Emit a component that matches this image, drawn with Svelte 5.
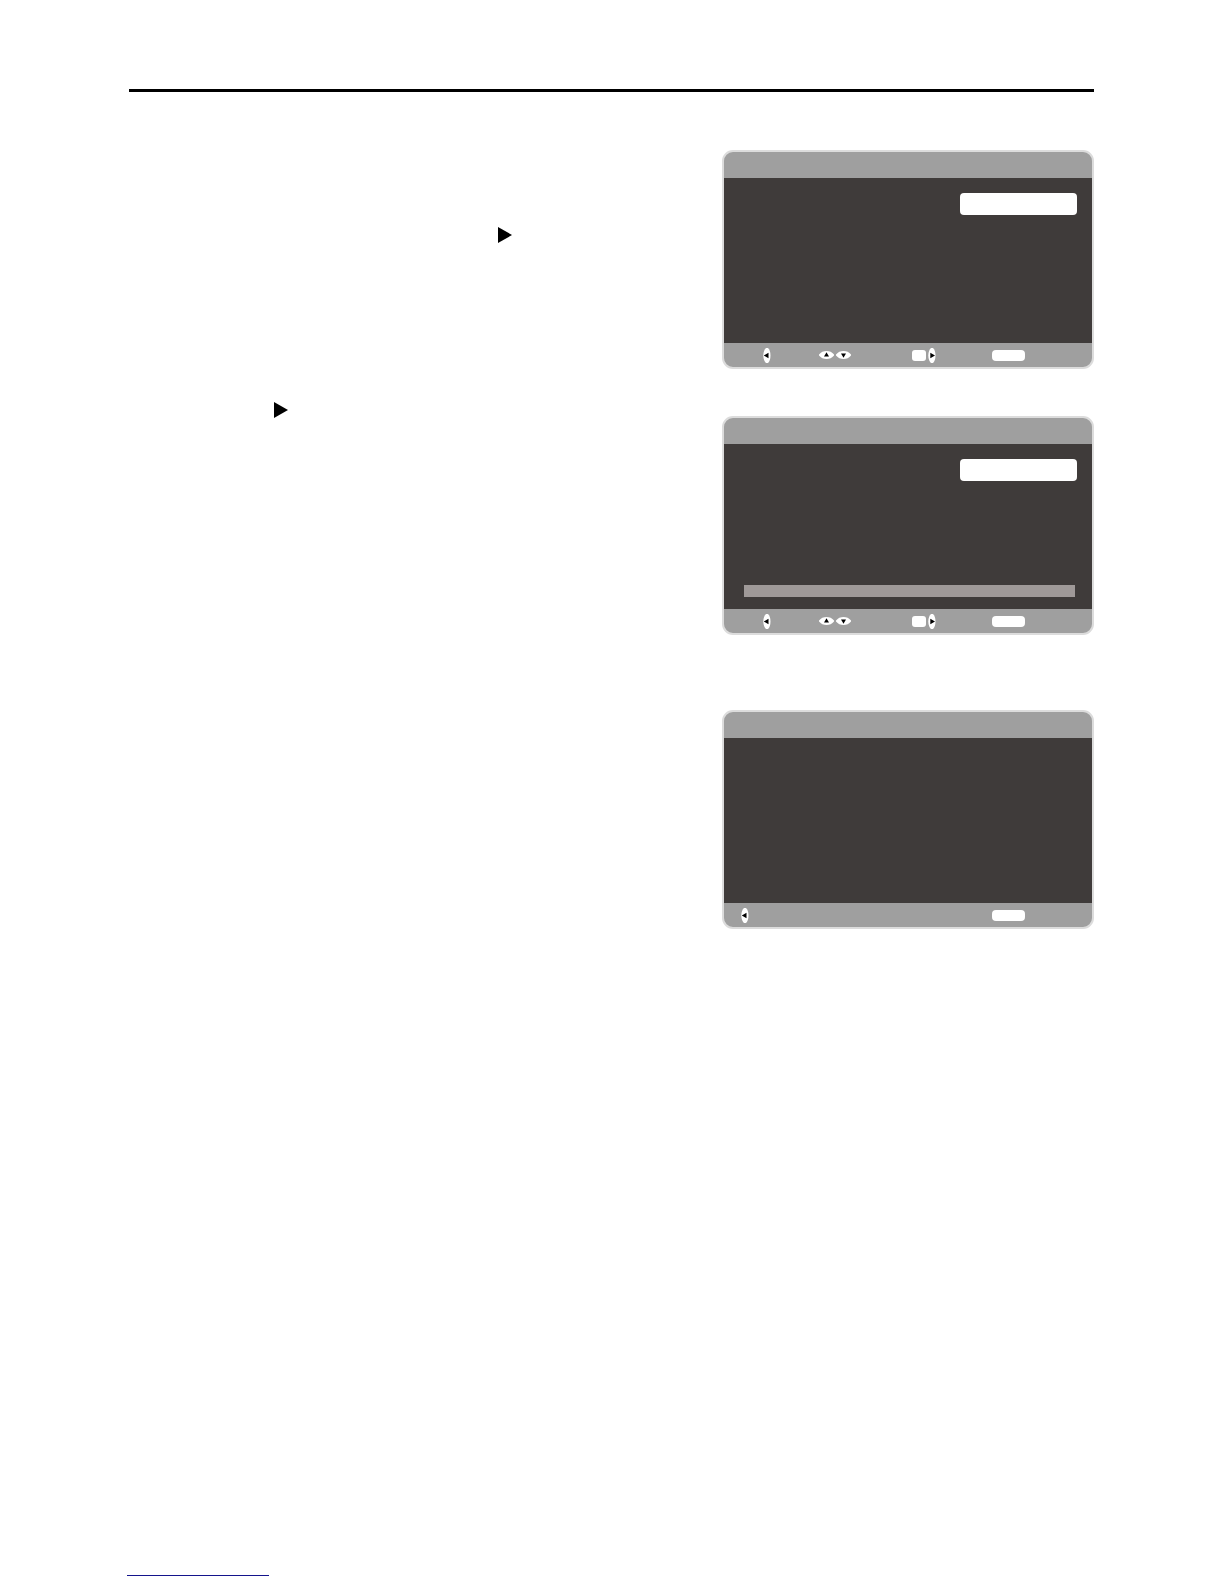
<script>
  const screens = [
    { id: 'select', field: true, bar: false, full: true },
    { id: 'progress', field: true, bar: true, full: true },
    { id: 'result', field: false, bar: false, full: false }
  ];
</script>

{#snippet pointer()}
  <svg class="pointer" viewBox="0 0 14 16" aria-hidden="true"><path d="M0 0 14 8 0 16Z" /></svg>
{/snippet}

{#snippet upright(label, flip)}
  <button class="key" aria-label={label}>
    <svg class="tall" viewBox="0 0 8 15" aria-hidden="true">
      {#if flip}
        <path class="pad" d="M3 0H5C6.500 1.500 7.500 4 7.500 7.500S6.500 13.500 5 15H3C1.500 13.500 .3 11 .3 7.500S1.500 1.500 3 0Z" />
        <path d="M2.300 4.800 7 7.500 2.300 10.200Z" />
      {:else}
        <path class="pad" d="M3 0H5C6.500 1.500 7.500 4 7.500 7.500S6.500 13.500 5 15H3C1.500 13.500 .3 11 .3 7.500S1.500 1.500 3 0Z" />
        <path d="M5.500 4.800 .8 7.500 5.500 10.200Z" />
      {/if}
    </svg>
  </button>
{/snippet}

{#snippet flat(label, down)}
  <button class="key" aria-label={label}>
    <svg class="wide" viewBox="0 0 15 8" aria-hidden="true">
      <path class="pad" d="M0 3.500C2 1 4.500 0 7.500 0S13 1 15 3.500V4.500C13 7 10.500 8 7.500 8S2 7 0 4.500Z" />
      {#if down}
        <path d="M5 2.500H10L7.500 6.700Z" />
      {:else}
        <path d="M5 5.500H10L7.500 1.300Z" />
      {/if}
    </svg>
  </button>
{/snippet}

<div class="page">
  <main>
    <div class="steps">
      <div class="step first">{@render pointer()}</div>
      <div class="step second">{@render pointer()}</div>
    </div>
    <div class="screens">
      {#each screens as s (s.id)}
        <section class="screen {s.id}">
          <header></header>
          <div class="body">
            {#if s.field}<input type="text" aria-label="Value" />{/if}
            {#if s.bar}<div class="bar"></div>{/if}
          </div>
          <footer class:short={!s.full}>
            <div class="group">{@render upright('Back', false)}</div>
            {#if s.full}
              <div class="group">
                {@render flat('Up', false)}
                {@render flat('Down', true)}
              </div>
              <div class="group">
                <button class="cap" aria-label="OK"></button>
                {@render upright('Next', true)}
              </div>
            {/if}
            <div class="group"><button class="cap long" aria-label="Exit"></button></div>
          </footer>
        </section>
      {/each}
    </div>
  </main>
  <div class="foot"><a href="#top" aria-label="Back to top"></a></div>
</div>

<style>
  :global(body) {
    margin: 0;
    background: #fff;
    font-family: 'Liberation Sans', Arial, sans-serif;
  }
  .page {
    box-sizing: border-box;
    min-height: 100vh;
    padding-top: 89px;
    display: flex;
    flex-direction: column;
  }
  main {
    margin: 0 130px 0 129px;
    border-top: 3px solid #000;
    display: grid;
    grid-template-columns: minmax(0, 1fr) 372px;
  }
  .steps {
    padding-top: 135px;
    display: flex;
    flex-direction: column;
    gap: 159px;
  }
  .step {
    display: flex;
  }
  .first {
    padding-left: 369px;
  }
  .second {
    padding-left: 145px;
  }
  .pointer {
    width: 14px;
    height: 16px;
  }
  .screens {
    padding-top: 58px;
    display: flex;
    flex-direction: column;
  }
  .screen {
    border: 2px solid #dcdcdc;
    border-radius: 11px;
    overflow: hidden;
    background: #9f9f9f;
  }
  .progress {
    margin: 47px 0 75px;
  }
  header {
    height: 26px;
  }
  .body {
    box-sizing: border-box;
    height: 165px;
    padding: 15px 15px 12px 20px;
    background: #3f3b3a;
    display: flex;
    flex-direction: column;
  }
  input {
    box-sizing: border-box;
    width: 117px;
    height: 22px;
    padding: 0 6px;
    border: 0;
    border-radius: 4px;
    background: #fff;
    align-self: flex-end;
  }
  .bar {
    height: 12px;
    margin-top: auto;
    margin-right: 2px;
    background: #9f9998;
  }
  footer {
    height: 24px;
    padding-left: 39px;
    display: grid;
    grid-template-columns: 56px 93px 80px 1fr;
    align-items: center;
  }
  footer.short {
    padding-left: 17px;
    grid-template-columns: 251px 1fr;
  }
  .group {
    display: flex;
    align-items: center;
    gap: 2px;
  }
  button {
    padding: 0;
    border: 0;
    background: none;
    display: block;
  }
  button svg {
    display: block;
  }
  .pad {
    fill: #fff;
  }
  .tall {
    width: 8px;
    height: 15px;
  }
  .wide {
    width: 15px;
    height: 8px;
  }
  .cap {
    width: 14px;
    height: 11px;
    border-radius: 3px;
    background: #fff;
  }
  .long {
    width: 33px;
    border-radius: 4px;
  }
  .foot {
    margin-top: auto;
    padding: 0 127px 8px;
    display: flex;
  }
  .foot a {
    width: 142px;
    height: 16px;
    border-bottom: 1px solid #14148c;
  }
</style>
